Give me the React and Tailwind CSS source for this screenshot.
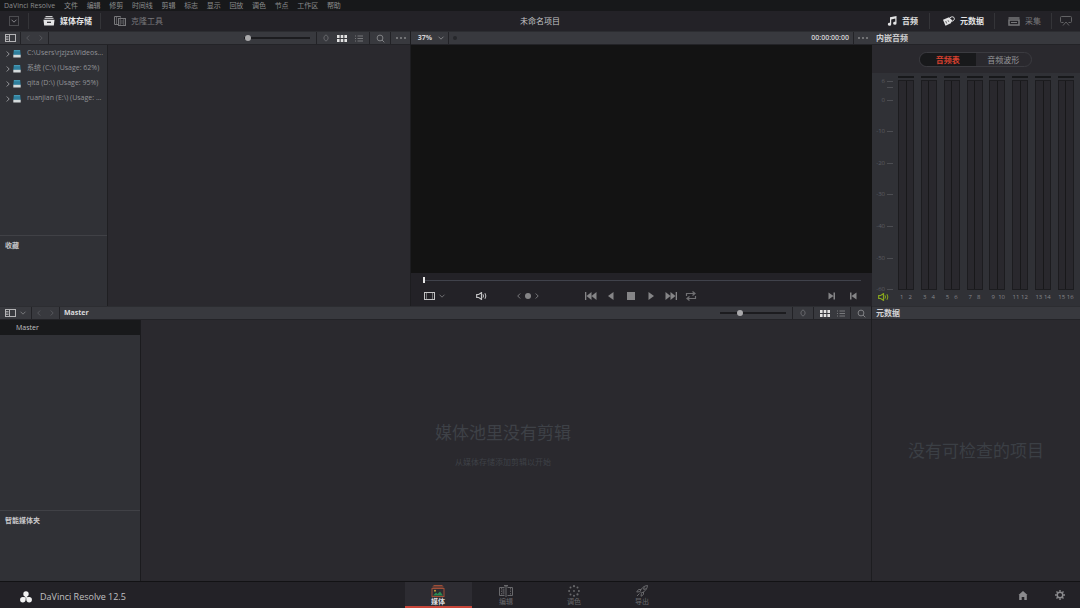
import React, { useState } from "react";

const menuItems = ["文件", "编辑", "修剪", "时间线", "剪辑", "标志", "显示", "回放", "调色", "节点", "工作区", "帮助"];

const drives = [
  "C:\\Users\\rjzjzs\\Videos...",
  "系统 (C:\\) (Usage: 62%)",
  "qita (D:\\) (Usage: 95%)",
  "ruanjian (E:\\) (Usage: ...",
];

const channelPairs = [[1, 2], [3, 4], [5, 6], [7, 8], [9, 10], [11, 12], [13, 14], [15, 16]];

const iconBtn = "flex items-center justify-center shrink-0";

/* ---------- Icons ---------- */

const Chevron = ({ dir = "down", className = "" }) => {
  const paths = { down: "M1.5 2.7 4 5.2 6.5 2.7", left: "M5.2 1.5 2.7 4 5.2 6.5", right: "M2.7 1.5 5.2 4 2.7 6.5" };
  return (
    <svg viewBox="0 0 8 8" className={`w-[8px] h-[8px] ${className}`} fill="none" stroke="currentColor">
      <path d={paths[dir]} />
    </svg>
  );
};

const PanelIcon = () => (
  <svg viewBox="0 0 11 8" className="w-[11px] h-[8px] text-[#b4b4b6]" fill="none" stroke="currentColor">
    <rect x=".5" y=".5" width="10" height="7" />
    <path d="M4.5 1v6" />
    <path d="M1 2.500h2.500M1 4h2.500M1 5.500h2.500" strokeWidth=".8" />
  </svg>
);

const SortIcon = () => (
  <svg viewBox="0 0 6 8" className="w-[6px] h-[8px] text-[#66676b]" fill="none" stroke="currentColor">
    <path d="M1 5.300V2.700L3 .8l2 1.900v2.600L3 7.200z" />
  </svg>
);

const GridIcon = () => (
  <svg viewBox="0 0 10 7" className="w-[10px] h-[7px] text-[#e2e2e2]" fill="currentColor">
    <path d="M0 0h2.600v3H0zM3.700 0h2.600v3H3.700zM7.400 0H10v3H7.400zM0 4h2.600v3H0zM3.700 4h2.600v3H3.700zM7.400 4H10v3H7.400z" />
  </svg>
);

const ListIcon = () => (
  <svg viewBox="0 0 8 7" className="w-[8px] h-[7px] text-[#77787b]" stroke="currentColor">
    <path d="M0 1h1M2.500 1H8M0 3.500h1M2.500 3.500H8M0 6h1M2.500 6H8" />
  </svg>
);

const SearchIcon = () => (
  <svg viewBox="0 0 9 9" className="w-[9px] h-[9px] text-[#808184]" fill="none" stroke="currentColor">
    <circle cx="4" cy="4" r="2.900" />
    <path d="M6 6 8.300 8.300" />
  </svg>
);

const DotsIcon = () => (
  <svg viewBox="0 0 12 4" className="w-[12px] h-[4px] text-[#858689]" fill="currentColor">
    <circle cx="2" cy="2" r="1" />
    <circle cx="6" cy="2" r="1" />
    <circle cx="10" cy="2" r="1" />
  </svg>
);

const StorageIcon = () => (
  <svg viewBox="0 0 12 10" className="w-[12px] h-[10px]" fill="none" stroke="currentColor">
    <path d="M2.500 .6h7M1.500 2.300h9" />
    <path d="M.5 3.800h11l-.7 5.700H1.200z" fill="currentColor" stroke="none" />
    <path d="M4 6.300h4" stroke="#232227" strokeWidth="1.200" />
  </svg>
);

const CloneIcon = () => (
  <svg viewBox="0 0 12 10" className="w-[12px] h-[10px]" fill="none" stroke="currentColor">
    <path d="M4 8.500H.5v-8h6v1" />
    <path d="M2.500 1v7" strokeWidth=".7" />
    <rect x="4.500" y="2.500" width="7" height="7" />
    <path d="M6.200 3v6M9.800 3v6" strokeWidth=".7" />
    <path d="M6.500 5h3M6.500 7h3" strokeWidth=".7" />
  </svg>
);

const MusicIcon = () => (
  <svg viewBox="0 0 10 10" className="w-[10px] h-[10px]" fill="currentColor">
    <path d="M3 1.300 9.500 0v7.200a1.700 1.500 0 1 1-1.200-1.400V2.600L4.200 3.400v4.800A1.700 1.500 0 1 1 3 6.800z" />
  </svg>
);

const TagIcon = () => (
  <svg viewBox="0 0 12 10" className="w-[12px] h-[10px]">
    <path d="M0 3.800 6 1.300 9.200 4.300 7.800 7.300 2.500 9.700z" fill="currentColor" />
    <path d="M6 3C7 .5 11 0 11.300 2.300S9.500 5.500 8.200 5" fill="none" stroke="currentColor" />
    <path d="M2.700 5 3.700 7.500M5 4.300l.8 1.500" stroke="#232227" strokeWidth=".7" />
  </svg>
);

const CaptureIcon = () => (
  <svg viewBox="0 0 12 9" className="w-[12px] h-[9px]" fill="none" stroke="currentColor">
    <path d="M.5 1h11" strokeWidth="1.500" />
    <rect x="1" y="3" width="10" height="5" strokeWidth="1.500" />
    <path d="M3 5.500h6" />
  </svg>
);

const MonitorIcon = () => (
  <svg viewBox="0 0 12 10" className="w-[12px] h-[10px]" fill="none" stroke="currentColor">
    <path d="M3.500 6.500h-2a1 1 0 0 1-1-1v-4a1 1 0 0 1 1-1h9a1 1 0 0 1 1 1v4a1 1 0 0 1-1 1h-2" />
    <path d="M3 9.500 6 6l3 3.500" />
  </svg>
);

const DriveIcon = () => (
  <svg viewBox="0 0 8 8" className="w-[8px] h-[8px]">
    <path d="M.8 0h6.400l.5 5H.3z" fill="#2f7f9d" />
    <path d="M1 .7h6" stroke="#4ba0bb" />
    <path d="M.3 4.800h7.400v2.700H.3z" fill="#d4dadb" />
  </svg>
);

const SpeakerIcon = ({ className = "" }) => (
  <svg viewBox="0 0 11 8" className={`w-[11px] h-[8px] ${className}`} fill="none" stroke="currentColor">
    <path d="M.7 2.500h2L5.500 .6v6.800L2.700 5.500h-2z" strokeWidth="1.200" />
    <path d="M7 2.300q1 1.700 0 3.400M9 1.200q1.700 2.800 0 5.600" />
  </svg>
);

const transportPaths = {
  first: "M0 1h1.300v8H0zM1.500 5 6.500 1v8zM6.500 5l5-4v8z",
  reverse: "M3 5l5.500-4v8z",
  stop: "M2 1h8v8H2z",
  play: "M9 5 3.500 1v8z",
  last: "M12 1h-1.300v8H12zM10.500 5l-5-4v8zM5.500 5l-5-4v8z",
  next: "M2.500 1.500v7L7.500 5zM7.500 1.500H9v7H7.500z",
  prev: "M9.500 1.500v7L4.500 5zM3 1.500h1.500v7H3z",
};

const TransportButton = ({ name, label }) => (
  <button aria-label={label} className={`${iconBtn} w-[12px] h-[12px] text-[#858587]`}>
    <svg viewBox="0 0 12 10" className="w-[12px] h-[10px]" fill="currentColor">
      <path d={transportPaths[name]} />
    </svg>
  </button>
);

const LoopIcon = () => (
  <svg viewBox="0 0 12 10" className="w-[12px] h-[10px]" fill="none" stroke="currentColor" strokeWidth="1.200">
    <path d="M1.500 5V2.500h8M7.500 .5l2.500 2-2.500 2M10.500 5v2.500h-8M4.500 5.500 2 7.500l2.500 2" />
  </svg>
);

const MediaPageIcon = () => (
  <svg viewBox="0 0 14 12" className="w-[14px] h-[12px]" fill="none">
    <path d="M2.500 .5h9M1.500 2h11" stroke="#a04f38" />
    <rect x="1" y="3.500" width="12" height="8" stroke="#a04f38" />
    <circle cx="4" cy="5.800" r="1" fill="#c9a13b" />
    <path d="M2 10.500 5 7.500l1.500 1.500L9 6.500l3 4z" fill="#2c8a52" />
  </svg>
);

const EditPageIcon = () => (
  <svg viewBox="0 0 14 12" className="w-[14px] h-[12px]" fill="none" stroke="currentColor">
    <path d="M5.500 2.500h-5v8h5M8.500 2.500h5v8h-5M7 1v11" />
    <path d="M5 .7h4" strokeWidth="1.400" />
    <path d="M2.500 3v7M11.500 3v7" strokeWidth=".8" strokeDasharray="1.500 1" />
    <path d="M3.500 3.500h2v6h-2z" fill="currentColor" stroke="none" opacity=".6" />
  </svg>
);

const ColorPageIcon = () => (
  <svg viewBox="0 0 12 12" className="w-[12px] h-[12px]" fill="currentColor">
    <circle cx="6" cy="1.200" r="1.100" />
    <circle cx="9.500" cy="2.600" r="1" />
    <circle cx="10.900" cy="6" r="1" />
    <circle cx="9.500" cy="9.400" r="1.100" />
    <circle cx="6" cy="10.800" r="1" />
    <circle cx="2.500" cy="9.400" r="1" />
    <circle cx="1.100" cy="6" r="1" />
    <circle cx="2.500" cy="2.600" r="1" />
    <circle cx="6" cy="6" r=".9" />
  </svg>
);

const RocketIcon = () => (
  <svg viewBox="0 0 12 12" className="w-[12px] h-[12px]" fill="none" stroke="currentColor">
    <path d="M4 6.500C5.500 3 8 .7 11.500 .5 11.300 4 9 6.500 5.500 8z" />
    <path d="M5 4.500H2.500L.7 7l3-.3M7.500 7v2.500L5 11.300l.4-3M3.500 8.500l-2.500 2.500" />
    <circle cx="8.300" cy="3.700" r=".9" />
  </svg>
);

const HomeIcon = () => (
  <svg viewBox="0 0 10 9" className="w-[10px] h-[9px]" fill="currentColor">
    <path d="M5 0 9.500 4H8.800v5H6.300V6H3.700v3H1.200V4H.5z" />
  </svg>
);

const GearIcon = () => (
  <svg viewBox="0 0 10 10" className="w-[10px] h-[10px]" fill="none" stroke="currentColor">
    <circle cx="5" cy="5" r="2.800" strokeWidth="1.500" />
    <path d="M5 0v1.800M5 8.200V10M0 5h1.800M8.200 5H10M1.500 1.500l1.200 1.200M7.300 7.300l1.200 1.200M1.500 8.500l1.200-1.200M7.300 2.700l1.200-1.200" strokeWidth="1.400" />
  </svg>
);

const LogoIcon = () => (
  <svg viewBox="0 0 12 12" className="w-[12px] h-[12px] text-[#f2f2f2]" fill="currentColor">
    <circle cx="6" cy="3" r="2.700" />
    <circle cx="2.800" cy="8.800" r="2.700" />
    <circle cx="9.200" cy="8.800" r="2.700" />
    <path d="M4.200 4 6 7.200 7.800 4zM2 6.500 6 6l-1 4zM10 6.500 6 6l1 4z" />
  </svg>
);

/* ---------- Shared pieces ---------- */

const headerClass = "h-[14px] shrink-0 flex items-stretch bg-[#38393e] border-t border-[#2c2d31] border-b border-b-[#232327]";
const cellClass = "flex items-center justify-center shrink-0 border-[#222226]";
const titleClass = "text-[8px] font-semibold text-[#d2d2d4] whitespace-nowrap";

const ZoomSlider = ({ label, value }) => (
  <input
    type="range"
    aria-label={label}
    defaultValue={value}
    className="self-center w-[66px] h-[6px] mr-[6px] appearance-none bg-transparent [&::-webkit-slider-runnable-track]:h-[2px] [&::-webkit-slider-runnable-track]:bg-[#1c1c1f] [&::-webkit-slider-thumb]:appearance-none [&::-webkit-slider-thumb]:w-[6px] [&::-webkit-slider-thumb]:h-[6px] [&::-webkit-slider-thumb]:-mt-[2px] [&::-webkit-slider-thumb]:rounded-full [&::-webkit-slider-thumb]:bg-[#a9a9ab]"
  />
);

const HistoryButtons = () => (
  <div className={`${cellClass} w-[28px] gap-[5px] border-r text-[#56575c]`}>
    <button aria-label="后退"><Chevron dir="left" /></button>
    <button aria-label="前进"><Chevron dir="right" /></button>
  </div>
);

const ToolbarButton = ({ icon, label, active }) => (
  <button
    className={`flex items-center gap-[5px] text-[8px] whitespace-nowrap ${
      active ? "font-semibold text-[#e4e4e5]" : "text-[#77777a]"
    }`}
  >
    {icon}
    {label}
  </button>
);

const Divider = () => <span className="w-px h-[16px] bg-[#343438]" />;

/* ---------- Sections ---------- */

const TopBar = () => (
  <header>
    <div className="h-[11px] flex items-center bg-[#17181a] pl-1 text-[7px] leading-[11px] text-[#8b8c8d] whitespace-nowrap">
      <button className="w-[60px] text-left">DaVinci Resolve</button>
      <nav className="w-[277px] flex justify-between">
        {menuItems.map((item) => (
          <button key={item}>{item}</button>
        ))}
      </nav>
    </div>

    <div className="h-[20px] grid grid-cols-[1fr_auto_1fr] items-center bg-[#232227]">
      <div className="flex items-center pl-[9px]">
        <button aria-label="界面菜单" className={`${iconBtn} w-[10px] h-[10px] mr-[9px] border border-[#4c4c50] text-[#85858a]`}>
          <Chevron />
        </button>
        <Divider />
        <div className="pl-[14px] pr-[8px]">
          <ToolbarButton active icon={<StorageIcon />} label="媒体存储" />
        </div>
        <Divider />
        <div className="pl-[13px]">
          <ToolbarButton icon={<CloneIcon />} label="克隆工具" />
        </div>
      </div>

      <h1 className="text-[8px] text-[#c5c5c7]">未命名项目</h1>

      <div className="flex items-center justify-end pr-[8px]">
        <div className="pr-[11px]">
          <ToolbarButton active icon={<MusicIcon />} label="音频" />
        </div>
        <Divider />
        <div className="pl-[13px] pr-[10px]">
          <ToolbarButton active icon={<TagIcon />} label="元数据" />
        </div>
        <Divider />
        <div className="pl-[13px] pr-[10px]">
          <ToolbarButton icon={<CaptureIcon />} label="采集" />
        </div>
        <Divider />
        <button aria-label="双屏" className="pl-[8px] text-[#626265]">
          <MonitorIcon />
        </button>
      </div>
    </div>
  </header>
);

const MediaStorage = () => (
  <section className="w-[411px] shrink-0 flex flex-col border-r border-[#1d1d20]">
    <div className={headerClass}>
      <button aria-label="侧栏" className={`${cellClass} w-[21px] border-r`}><PanelIcon /></button>
      <HistoryButtons />
      <div className="flex-1" />
      <ZoomSlider label="缩略图大小" value={1} />
      <div className={`${cellClass} w-[53px] gap-[8px] border-l`}>
        <button aria-label="排序"><SortIcon /></button>
        <button aria-label="缩略图视图"><GridIcon /></button>
        <button aria-label="列表视图"><ListIcon /></button>
      </div>
      <button aria-label="搜索" className={`${cellClass} w-[21px] border-l`}><SearchIcon /></button>
      <button aria-label="选项" className={`${cellClass} w-[20px] border-l`}><DotsIcon /></button>
    </div>

    <div className="flex-1 flex">
      <aside className="w-[108px] shrink-0 flex flex-col bg-[#303136] border-r border-[#1f1f22]">
        <ul className="flex-1 pt-[1px]">
          {drives.map((drive) => (
            <li key={drive}>
              <button className="w-full h-[15px] flex items-center pl-[4px] text-[7px] text-[#929396] whitespace-nowrap">
                <Chevron dir="right" className="mr-[1px]" />
                <DriveIcon />
                <span className="pl-[6px]">{drive}</span>
              </button>
            </li>
          ))}
        </ul>
        <div className="h-[71px] border-t border-[#404146] px-[5px] pt-[5px]">
          <h2 className="text-[7px] leading-[10px] font-semibold text-[#c8c8ca]">收藏</h2>
        </div>
      </aside>
      <div className="flex-1 bg-[#2a292e]" />
    </div>
  </section>
);

const Viewer = () => (
  <section className="flex-1 flex flex-col bg-[#232227]">
    <div className={headerClass}>
      <button className={`${cellClass} w-[38px] gap-[5px] pl-[4px] border-r text-[7px] font-bold text-[#d2d2d4]`}>
        37% <Chevron className="text-[#808184]" />
      </button>
      <span className="self-center ml-[4px] w-[4px] h-[4px] rounded-full bg-[#26272b]" />
      <div className="flex-1" />
      <span className="self-center pr-[4px] text-[7px] font-semibold text-[#d2d2d4]">00:00:00:00</span>
      <button aria-label="选项" className={`${cellClass} w-[19px] border-l`}><DotsIcon /></button>
    </div>

    <div className="h-[228px] shrink-0 bg-[#131313]" />

    <input
      type="range"
      aria-label="播放位置"
      defaultValue={0}
      className="h-[6px] mt-[4px] ml-[12px] mr-[11px] appearance-none bg-transparent [&::-webkit-slider-runnable-track]:h-[1px] [&::-webkit-slider-runnable-track]:bg-[#40424b] [&::-webkit-slider-thumb]:appearance-none [&::-webkit-slider-thumb]:w-[2px] [&::-webkit-slider-thumb]:h-[6px] [&::-webkit-slider-thumb]:-mt-[3px] [&::-webkit-slider-thumb]:bg-[#e6e6e6]"
    />

    <div className="grid grid-cols-[1fr_auto_1fr] items-center pt-[7px] pb-[4px] px-[13px]">
      <div className="flex items-center">
        <button aria-label="画面显示" className="flex items-center gap-[3px] text-[#6d6d70]">
          <svg viewBox="0 0 11 8" className="w-[11px] h-[8px] text-[#c4c4c5]" fill="none" stroke="currentColor">
            <rect x=".5" y=".5" width="10" height="7" />
            <path d="M2.500 1v6M8.500 1v6" strokeWidth=".5" />
          </svg>
          <Chevron />
        </button>
        <button aria-label="静音" className="ml-[30px] text-[#c4c4c5]"><SpeakerIcon /></button>
        <div className="flex items-center ml-[28px] gap-[2px] text-[#77777a]">
          <button aria-label="上一标记"><Chevron dir="left" /></button>
          <span className="w-[6px] h-[6px] rounded-full bg-[#858587]" />
          <button aria-label="下一标记"><Chevron dir="right" /></button>
        </div>
      </div>

      <div className="flex items-center gap-[8px] pr-[2px]">
        <TransportButton name="first" label="第一帧" />
        <TransportButton name="reverse" label="倒放" />
        <TransportButton name="stop" label="停止" />
        <TransportButton name="play" label="播放" />
        <TransportButton name="last" label="最后一帧" />
        <button aria-label="循环" className="text-[#707073]"><LoopIcon /></button>
      </div>

      <div className="flex items-center justify-end gap-[9px]">
        <TransportButton name="next" label="标记入点" />
        <TransportButton name="prev" label="标记出点" />
      </div>
    </div>
  </section>
);

const ScaleMark = ({ value, className = "" }) => (
  <div className={`h-0 flex items-center justify-end gap-[2px] ${className}`}>
    <span className="text-[6px]">{value}</span>
    <span className="w-[6px] h-px shrink-0 bg-[#4c4d52]" />
  </div>
);

const AudioMeters = () => {
  const [tab, setTab] = useState("音频表");

  return (
    <section className="w-[208px] shrink-0 flex flex-col bg-[#303136]">
      <div className={headerClass}>
        <h2 className={`${titleClass} self-center pl-[4px]`}>内嵌音频</h2>
      </div>

      <div className="h-[28px] flex items-center justify-center pr-px bg-[#2a292e]">
        <div className="flex w-[113px] h-[15px] rounded-full border border-[#3b3b40] overflow-hidden">
          {["音频表", "音频波形"].map((name) => (
            <button
              key={name}
              onClick={() => setTab(name)}
              className={`flex-1 text-[8px] leading-[13px] ${
                tab === name ? "bg-[#18191b] font-semibold text-[#d8412f]" : "text-[#98989b]"
              }`}
            >
              {name}
            </button>
          ))}
        </div>
      </div>

      <div className="flex-1 flex pt-[3px] pr-[6px]">
        <div className="w-[21px] shrink-0 flex flex-col pt-[5px] text-[#5c5d62]">
          <ScaleMark value="6" />
          <ScaleMark value="" className="mt-[6px]" />
          <div className="flex-1 flex flex-col justify-between mt-[13px]">
            {[0, -10, -20, -30, -40, -50, -60].map((db) => (
              <ScaleMark key={db} value={db} />
            ))}
          </div>
        </div>
        <div className="flex-1 flex justify-between pl-[5px]">
          {channelPairs.map(([l]) => (
            <div key={l} className="w-[16px] flex flex-col gap-[2px]">
              <div className="h-[2px] bg-[#17181a]" />
              <div className="flex-1 flex border border-[#1c1c1f] bg-[#29282d]">
                <div className="flex-1 border-r border-[#18181a]" />
                <div className="flex-1" />
              </div>
            </div>
          ))}
        </div>
      </div>

      <div className="flex items-center h-[16px] pr-[6px] pb-[2px]">
        <button aria-label="监听" className="w-[26px] shrink-0 pl-[6px] text-[#87a71c]"><SpeakerIcon /></button>
        <div className="flex-1 flex justify-between text-[6px] text-[#85868a]">
          {channelPairs.map(([l, r]) => (
            <div key={l} className="w-[16px] grid grid-cols-2 gap-[1px] text-center">
              <span>{l}</span>
              <span>{r}</span>
            </div>
          ))}
        </div>
      </div>
    </section>
  );
};

const MediaPool = () => (
  <section className="flex-1 flex flex-col">
    <div className={headerClass}>
      <button aria-label="侧栏" className={`${cellClass} w-[32px] gap-[3px] border-r text-[#77787b]`}>
        <PanelIcon />
        <Chevron />
      </button>
      <HistoryButtons />
      <h2 className="self-center pl-[4px] text-[7px] font-bold text-[#dcdcde]">Master</h2>
      <div className="flex-1" />
      <ZoomSlider label="片段大小" value={28} />
      <button aria-label="排序" className={`${cellClass} w-[21px] border-l`}><SortIcon /></button>
      <div className={`${cellClass} w-[37px] gap-[7px] border-l`}>
        <button aria-label="缩略图视图"><GridIcon /></button>
        <button aria-label="列表视图"><ListIcon /></button>
      </div>
      <button aria-label="搜索" className={`${cellClass} w-[21px] border-l`}><SearchIcon /></button>
    </div>

    <div className="flex-1 flex">
      <aside className="w-[141px] shrink-0 flex flex-col bg-[#303136] border-r border-[#1b1b1e]">
        <button className="h-[15px] pl-[16px] pt-px bg-[#18191b] text-left text-[7px] text-[#c0c0c2]">Master</button>
        <div className="flex-1" />
        <div className="h-[71px] border-t border-[#404146] px-[5px] pt-[5px]">
          <h2 className="text-[7px] leading-[10px] font-semibold text-[#c8c8ca]">智能媒体夹</h2>
        </div>
      </aside>
      <div className="flex-1 flex flex-col items-center justify-center gap-[12px] pr-[6px] pb-[10px] bg-[#2a292e]">
        <p className="text-[17px] leading-[20px] text-[#3e4147]">媒体池里没有剪辑</p>
        <p className="text-[8px] leading-[14px] text-[#3e4147]">从媒体存储添加剪辑以开始</p>
      </div>
    </div>
  </section>
);

const Metadata = () => (
  <section className="w-[209px] shrink-0 flex flex-col border-l border-[#1d1d20]">
    <div className={headerClass}>
      <h2 className={`${titleClass} self-center pl-[4px]`}>元数据</h2>
    </div>
    <div className="flex-1 flex items-center justify-center pt-px bg-[#2a292e]">
      <p className="text-[17px] leading-[20px] text-[#3b3f45]">没有可检查的项目</p>
    </div>
  </section>
);

const pages = [
  { label: "媒体", icon: <MediaPageIcon /> },
  { label: "编辑", icon: <EditPageIcon /> },
  { label: "调色", icon: <ColorPageIcon /> },
  { label: "导出", icon: <RocketIcon /> },
];

const PageBar = () => {
  const [page, setPage] = useState("媒体");

  return (
    <footer className="h-[27px] shrink-0 grid grid-cols-[1fr_auto_1fr] items-stretch bg-[#232227] border-t border-[#121214]">
      <div className="flex items-center gap-[8px] pl-[20px] pt-[3px]">
        <LogoIcon />
        <span className="text-[9px] text-[#c0c0c2]">DaVinci Resolve 12.5</span>
      </div>

      <nav className="flex gap-px">
        {pages.map(({ label, icon }) => (
          <button
            key={label}
            onClick={() => setPage(label)}
            className={`w-[67px] flex flex-col items-center pt-[3px] text-[7px] leading-[9px] border-b-2 ${
              page === label
                ? "bg-[#2d2c32] border-[#c8463a] font-semibold text-[#dcdcde]"
                : "border-transparent text-[#69696c]"
            }`}
          >
            {icon}
            {label}
          </button>
        ))}
      </nav>

      <div className="flex items-center justify-end gap-[27px] pr-[15px] text-[#8b8b8e]">
        <button aria-label="项目管理器"><HomeIcon /></button>
        <button aria-label="项目设置"><GearIcon /></button>
      </div>
    </footer>
  );
};

const App = () => {
  return (
    <div className="min-h-screen flex flex-col bg-[#2a292e] font-['Open_Sans','Noto_Sans_CJK_SC',sans-serif] select-none">
      <TopBar />
      <main className="flex-1 flex flex-col">
        <div className="flex">
          <MediaStorage />
          <Viewer />
          <AudioMeters />
        </div>
        <div className="flex-1 flex">
          <MediaPool />
          <Metadata />
        </div>
      </main>
      <PageBar />
    </div>
  );
};

export default App;
